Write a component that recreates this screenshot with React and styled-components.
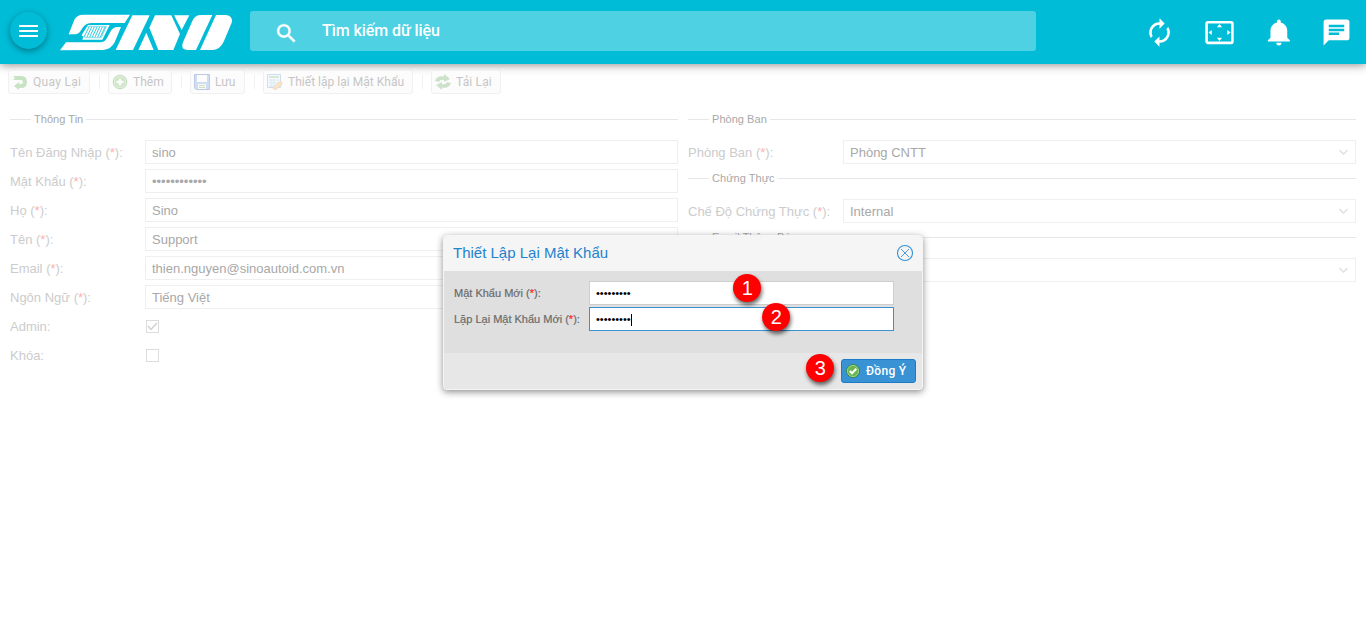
import React from "react";
import styled, { createGlobalStyle, css } from "styled-components";

const GlobalStyle = createGlobalStyle`
  * { box-sizing: border-box; }
  html, body { margin: 0; background: #fff; }
  body { font-family: "Liberation Sans", Arial, sans-serif; font-size: 13px; overflow: hidden; }
`;

const Page = styled.div`
  width: 1366px;
  height: 625px;
  overflow: hidden;
`;

const Header = styled.header`
  display: flex;
  align-items: flex-start;
  height: 64px;
  padding: 11px 14px 0 10px;
  background: #00bcd7;
  box-shadow: 0 1px 9px rgba(0, 0, 0, 0.45);
`;

const MenuButton = styled.button`
  display: grid;
  place-items: center;
  width: 37px;
  height: 37px;
  margin: 1px 13px 0 0;
  padding: 0;
  border: 0;
  border-radius: 50%;
  background: #00bcd7;
  box-shadow: 0 2px 6px rgba(0, 0, 0, 0.38);
`;

const Logo = styled.svg`
  width: 174px;
  height: 37px;
  margin: 3px 16px 0 0;
  fill: #fff;
`;

const SearchBox = styled.div`
  display: flex;
  align-items: center;
  width: 786px;
  height: 40px;
  padding-left: 24px;
  border-radius: 3px;
  background: #4dd1e3;
  color: #fff;
  font: 500 16px Roboto, sans-serif;
  svg { width: 25px; height: 25px; margin: 4px 23px 0 0; fill: #fff; stroke: #fff; stroke-width: 0.4; }
`;

const SearchText = styled.span`
  margin-top: -2px;
  letter-spacing: -0.08px;
`;

const HeaderIcons = styled.nav`
  display: flex;
  margin: 6px 0 0 auto;
  gap: 29px;
  svg { width: 31px; height: 31px; fill: #fff; }
  svg:last-child { margin-left: -3px; }
`;

const Toolbar = styled.div`
  display: flex;
  align-items: center;
  height: 36px;
  padding-left: 8px;
`;

const ToolButton = styled.button`
  display: flex;
  align-items: center;
  gap: 5px;
  width: ${(p) => p.$width}px;
  height: 24px;
  padding: 0 0 0 3px;
  border: 1px solid #f0f0f0;
  border-radius: 3px;
  background: #fcfcfc;
  color: #c6c6c6;
  font: 12px Roboto, sans-serif;
  letter-spacing: ${(p) => p.$spacing || 0}px;
  white-space: nowrap;
  svg { width: 16px; height: 16px; flex: none; opacity: 0.3; }
`;

const Separator = styled.i`
  width: 1px;
  height: 14px;
  margin: 0 8px 0 9px;
  background: #f1f1f1;
`;

const Form = styled.main`
  display: grid;
  grid-template-columns: 668px 668px;
  gap: 10px;
  padding: 12px 10px 0;
`;

const Group = styled.section`
  height: ${(p) => p.$height || "auto"};
`;

const Legend = styled.div`
  display: flex;
  align-items: center;
  height: 14px;
  margin-bottom: 14px;
  color: #a8a8a8;
  font-size: 11px;
  letter-spacing: 0.04px;
  white-space: nowrap;
  &::before { content: ""; width: 21px; height: 1px; margin-right: 3px; background: #e7e7eb; }
  &::after { content: ""; flex: 1; height: 1px; margin-left: 3px; background: #e7e7eb; }
`;

const Field = styled.div`
  display: flex;
  align-items: center;
  height: 24px;
  margin-bottom: 5px;
`;

const Label = styled.label`
  width: ${(p) => p.$width}px;
  flex: none;
  color: #cccccc;
  white-space: nowrap;
  b { color: #ffb0b0; font-weight: 400; }
`;

const Value = styled.div`
  display: flex;
  flex: 1;
  align-items: center;
  justify-content: space-between;
  height: 24px;
  padding: 1px 6px 0;
  border: 1px solid #efefef;
  color: #a8a8a8;
  svg { width: 9px; height: 6px; margin: -2px 1px 0 0; }
`;

const Check = styled.div`
  display: grid;
  place-items: center;
  width: 13px;
  height: 13px;
  margin-left: 1px;
  border: 1px solid #dcdcdc;
`;

const Dialog = styled.section`
  position: absolute;
  left: 443px;
  top: 235px;
  width: 480px;
  height: 155px;
  border: 1px solid #f5f5f5;
  border-radius: 4px;
  background: #e7e7e7;
  box-shadow: 0 2px 7px rgba(0, 0, 0, 0.45);
`;

const DialogHead = styled.div`
  display: flex;
  align-items: center;
  justify-content: space-between;
  height: 35px;
  padding: 0 8px 2px 9px;
  background: #f5f5f5;
  border-radius: 4px 4px 0 0;
  color: #1f82ce;
  font-size: 15px;
  svg { width: 18px; height: 18px; }
`;

const DialogBody = styled.div`
  display: flex;
  flex-direction: column;
  gap: 2px;
  height: 82px;
  padding: 10px 28px 0 10px;
  background: #dfdfdf;
`;

const DialogField = styled.div`
  display: flex;
  align-items: center;
  height: 24px;
`;

const DialogLabel = styled.label`
  width: 135px;
  color: #6a6a6a;
  font-size: 11px;
  -webkit-text-stroke: 0.2px currentColor;
  white-space: nowrap;
  b { color: #f22; font-weight: 400; }
`;

const DialogInput = styled.div`
  display: flex;
  flex: 1;
  align-items: center;
  height: 24px;
  padding-left: 6px;
  border: 1px solid ${(p) => (p.$focused ? "#3892d4" : "#cecece")};
  background: #fff;
  color: #000;
  font-size: 11px;
  ${(p) => p.$focused && css`&::after { content: ""; width: 1px; height: 12px; margin-top: 2px; background: #000; }`}
`;

const DialogFoot = styled.div`
  display: flex;
  justify-content: flex-end;
  padding: 6px 6px 0;
`;

const Confirm = styled.button`
  display: flex;
  align-items: center;
  gap: 5px;
  width: 75px;
  height: 24px;
  padding: 0 0 0 3px;
  border: 1px solid #1c7ac6;
  border-radius: 3px;
  background: #3892d4;
  color: #fff;
  font: 500 12px Roboto, sans-serif;
  letter-spacing: 0.3px;
`;

const Marker = styled.div`
  position: absolute;
  left: ${(p) => p.$x - 14}px;
  top: ${(p) => p.$y - 14}px;
  width: 28px;
  height: 28px;
  border-radius: 50%;
  background: #fe0000;
  color: #fff;
  font-size: 20px;
  line-height: 28px;
  text-align: center;
  box-shadow: 1px 3px 4px rgba(0, 0, 0, 0.6);
`;

const SinoLogo = () => (
  <Logo viewBox="180 43 522 111">
    <path d="M223 60Q232 45 248 45H390L374 70H276Q258 70 249 83L240 96Q234 104 220 104H206Z" />
    <path d="M180 152L198 128H301Q314 128 321 115L331 96Q339 82 352 82H363L344 128Q333 150 309 151Z" />
    <path d="M264 76H329L307 120H247L251 109Q242 111 247 103Z" />
    <path d="M267 82L252 112M275 82L261 112M283 82L269 112M291 82L277 112M299 82L285 112M307 82L293 112M315 82L301 112" fill="none" stroke="#00bcd7" strokeWidth="2.4" />
    <path d="M263 80H319L304 114H254" fill="none" stroke="#00bcd7" strokeWidth="1.6" />
    <path d="M397 47H449L399 151H347Z" />
    <path d="M439 99L461 151H415Z" />
    <path d="M465 47H514L540 103L520 151H475L448 84Z" />
    <path d="M522 47H568L545 91Z" />
    <path d="M600 46H637L588 151H562Q540 149 549 128L576 66Q584 47 600 46Z" />
    <path d="M648 46H678Q700 49 695 69L671 126Q660 149 639 151H600Z" />
  </Logo>
);

const icons = {
  back: <path d="M1 2H9Q15 2 15 8T9 14H7V16L2 12L7 8V10H9Q11 10 11 8T9 6H1L3 4Z" fill="#54a847" />,
  add: (
    <>
      <circle cx="8" cy="8" r="6.8" fill="#66b34c" stroke="#398d2c" />
      <circle cx="8" cy="8" r="5.8" stroke="#c4e6b8" strokeWidth=".8" />
      <path d="M8 4.5V11.5M4.5 8H11.5" stroke="#fff" strokeWidth="2.4" />
    </>
  ),
  save: (
    <>
      <path d="M.5.5H15.5V15.5H2L.5 14Z" fill="#6d9be2" stroke="#3159aa" />
      <path d="M3 1H13V8H3Z" fill="#fff" />
      <path d="M4 10H12V15H4Z" fill="#f2f7ea" />
      <path d="M5 11.5H11M5 13.5H11" stroke="#6f9b51" />
    </>
  ),
  reset: (
    <>
      <path d="M.5.5H13.5V13.5H.5Z" fill="#eef6ff" stroke="#699bd1" />
      <path d="M2 3H12" stroke="#5eae52" strokeWidth="1.5" />
      <path d="M2 6H12M2 9H12M2 12H9M4 5V13M7 5V13" stroke="#92b9df" />
      <path d="M7 13L11 9Q12 6 15 8Q16 11 13 12L9 16L6 15Z" fill="#f0b34f" stroke="#cf8e30" strokeWidth=".6" />
    </>
  ),
  reload: <path d="M0 7Q2 1 9 2.5V0L15 5L9 8V6Q5 5 4 8ZM16 9Q14 15 7 13.5V16L1 11L7 8V10Q11 11 12 8Z" fill="#62a45c" />,
};

const ToolIcon = ({ name }) => <svg viewBox="0 0 16 16" fill="none">{icons[name]}</svg>;

const tools = [
  ["back", "Quay Lại", 82, 0.3],
  ["add", "Thêm", 64, 0.05],
  ["save", "Lưu", 55, 0.1],
  ["reset", "Thiết lập lại Mật Khẩu", 150, 0.02],
  ["reload", "Tải Lại", 70, 0.15],
];

const account = [
  ["Tên Đăng Nhập", "sino"],
  ["Mật Khẩu", "••••••••••••"],
  ["Họ", "Sino"],
  ["Tên", "Support"],
  ["Email", "thien.nguyen@sinoautoid.com.vn"],
  ["Ngôn Ngữ", "Tiếng Việt"],
];

const settings = [
  ["Phòng Ban", "Phòng Ban", "Phòng CNTT"],
  ["Chứng Thực", "Chế Độ Chứng Thực", "Internal"],
  ["Email Thông Báo", "Email", ""],
];

const Required = () => <> (<b>*</b>):</>;

export default function App() {
  return (
    <Page>
      <GlobalStyle />
      <Header>
        <MenuButton aria-label="Menu">
          <svg width="19" height="12" viewBox="0 0 19 12"><path d="M0 1H19M0 6H19M0 11H19" stroke="#fff" strokeWidth="2" /></svg>
        </MenuButton>
        <SinoLogo />
        <SearchBox>
          <svg viewBox="0 0 24 24"><path d="M15.5 14h-.79l-.28-.27A6.47 6.47 0 0 0 16 9.5 6.5 6.5 0 1 0 9.5 16c1.61 0 3.09-.59 4.23-1.57l.27.28v.79l5 4.99L20.49 19zm-6 0a4.5 4.5 0 1 1 0-9 4.5 4.5 0 0 1 0 9z" /></svg>
          <SearchText>Tìm kiếm dữ liệu</SearchText>
        </SearchBox>
        <HeaderIcons>
          <svg viewBox="0 0 24 24"><path d="M12 6v3l4-4-4-4v3a8 8 0 0 0-6.76 12.26L6.7 14.8A6 6 0 0 1 12 6m6.76 1.74L17.3 9.2A6 6 0 0 1 12 18v-3l-4 4 4 4v-3a8 8 0 0 0 6.76-12.26" /></svg>
          <svg viewBox="0 0 24 24"><path d="M12 5.5 10 8h4zm6 4.5v4l2.5-2zM6 10l-2.5 2L6 14zm8 6h-4l2 2.5zM21 3H3a2 2 0 0 0-2 2v14c0 1.1.9 2 2 2h18a2 2 0 0 0 2-2V5a2 2 0 0 0-2-2m0 16H3V5h18z" /></svg>
          <svg viewBox="0 0 24 24"><path d="M11.5 22a2 2 0 0 0 2-2h-4a2 2 0 0 0 2 2m6.5-6v-5.5c0-3.07-2.13-5.64-5-6.32V3.5a1.5 1.5 0 0 0-3 0v.68c-2.87.68-5 3.25-5 6.32V16l-2 2v1h17v-1z" /></svg>
          <svg viewBox="0 0 24 24"><path d="M20 2H4a2 2 0 0 0-1.99 2L2 22l4-4h14a2 2 0 0 0 2-2V4a2 2 0 0 0-2-2M6 9h12v2H6zm8 5H6v-2h8zm4-6H6V6h12z" /></svg>
        </HeaderIcons>
      </Header>
      <Toolbar>
        {tools.map(([icon, text, width, spacing], i) => (
          <React.Fragment key={icon}>
            {i > 0 && <Separator />}
            <ToolButton $width={width} $spacing={spacing}><ToolIcon name={icon} />{text}</ToolButton>
          </React.Fragment>
        ))}
      </Toolbar>
      <Form>
        <Group>
          <Legend>Thông Tin</Legend>
          {account.map(([label, value]) => (
            <Field key={label}>
              <Label $width={135}>{label}<Required /></Label>
              <Value>{value}</Value>
            </Field>
          ))}
          <Field>
            <Label $width={135}>Admin:</Label>
            <Check><svg width="11" height="9" viewBox="0 0 11 9"><path d="M1 4L4 7.5L10 1" fill="none" stroke="#d0d0d0" strokeWidth="1.3" /></svg></Check>
          </Field>
          <Field><Label $width={135}>Khóa:</Label><Check /></Field>
        </Group>
        <div>
          {settings.map(([legend, label, value]) => (
            <Group key={legend} $height="59px">
              <Legend>{legend}</Legend>
              <Field>
                <Label $width={155}>{label}<Required /></Label>
                <Value>
                  <span>{value}</span>
                  <svg viewBox="0 0 9 6"><path d="M.5 1L4.5 5L8.5 1" fill="none" stroke="#e2e2e2" strokeWidth="1.6" /></svg>
                </Value>
              </Field>
            </Group>
          ))}
        </div>
      </Form>
      <Dialog>
        <DialogHead>
          <span>Thiết Lập Lại Mật Khẩu</span>
          <svg viewBox="0 0 18 18" fill="none" stroke="#3892d4"><circle cx="9" cy="9" r="7.5" strokeWidth="1.1" /><path d="M5 5L13 13M13 5L5 13" strokeWidth=".9" /></svg>
        </DialogHead>
        <DialogBody>
          <DialogField>
            <DialogLabel>Mật Khẩu Mới<Required /></DialogLabel>
            <DialogInput>•••••••••</DialogInput>
          </DialogField>
          <DialogField>
            <DialogLabel>Lặp Lại Mật Khẩu Mới<Required /></DialogLabel>
            <DialogInput $focused>•••••••••</DialogInput>
          </DialogField>
        </DialogBody>
        <DialogFoot>
          <Confirm>
            <svg width="16" height="16" viewBox="0 0 16 16"><circle cx="8" cy="8" r="6.4" fill="#68b750" stroke="#307d25" strokeWidth=".8" /><circle cx="8" cy="8" r="5.6" fill="none" stroke="#b8dfa9" strokeWidth=".7" /><path d="M4.8 8L7 10.3L11.3 5.8" fill="none" stroke="#fff" strokeWidth="2" /></svg>
            Đồng Ý
          </Confirm>
        </DialogFoot>
      </Dialog>
      <Marker $x={747.4} $y={288.4}>1</Marker>
      <Marker $x={776.4} $y={317.4}>2</Marker>
      <Marker $x={820.4} $y={368.4}>3</Marker>
    </Page>
  );
}
